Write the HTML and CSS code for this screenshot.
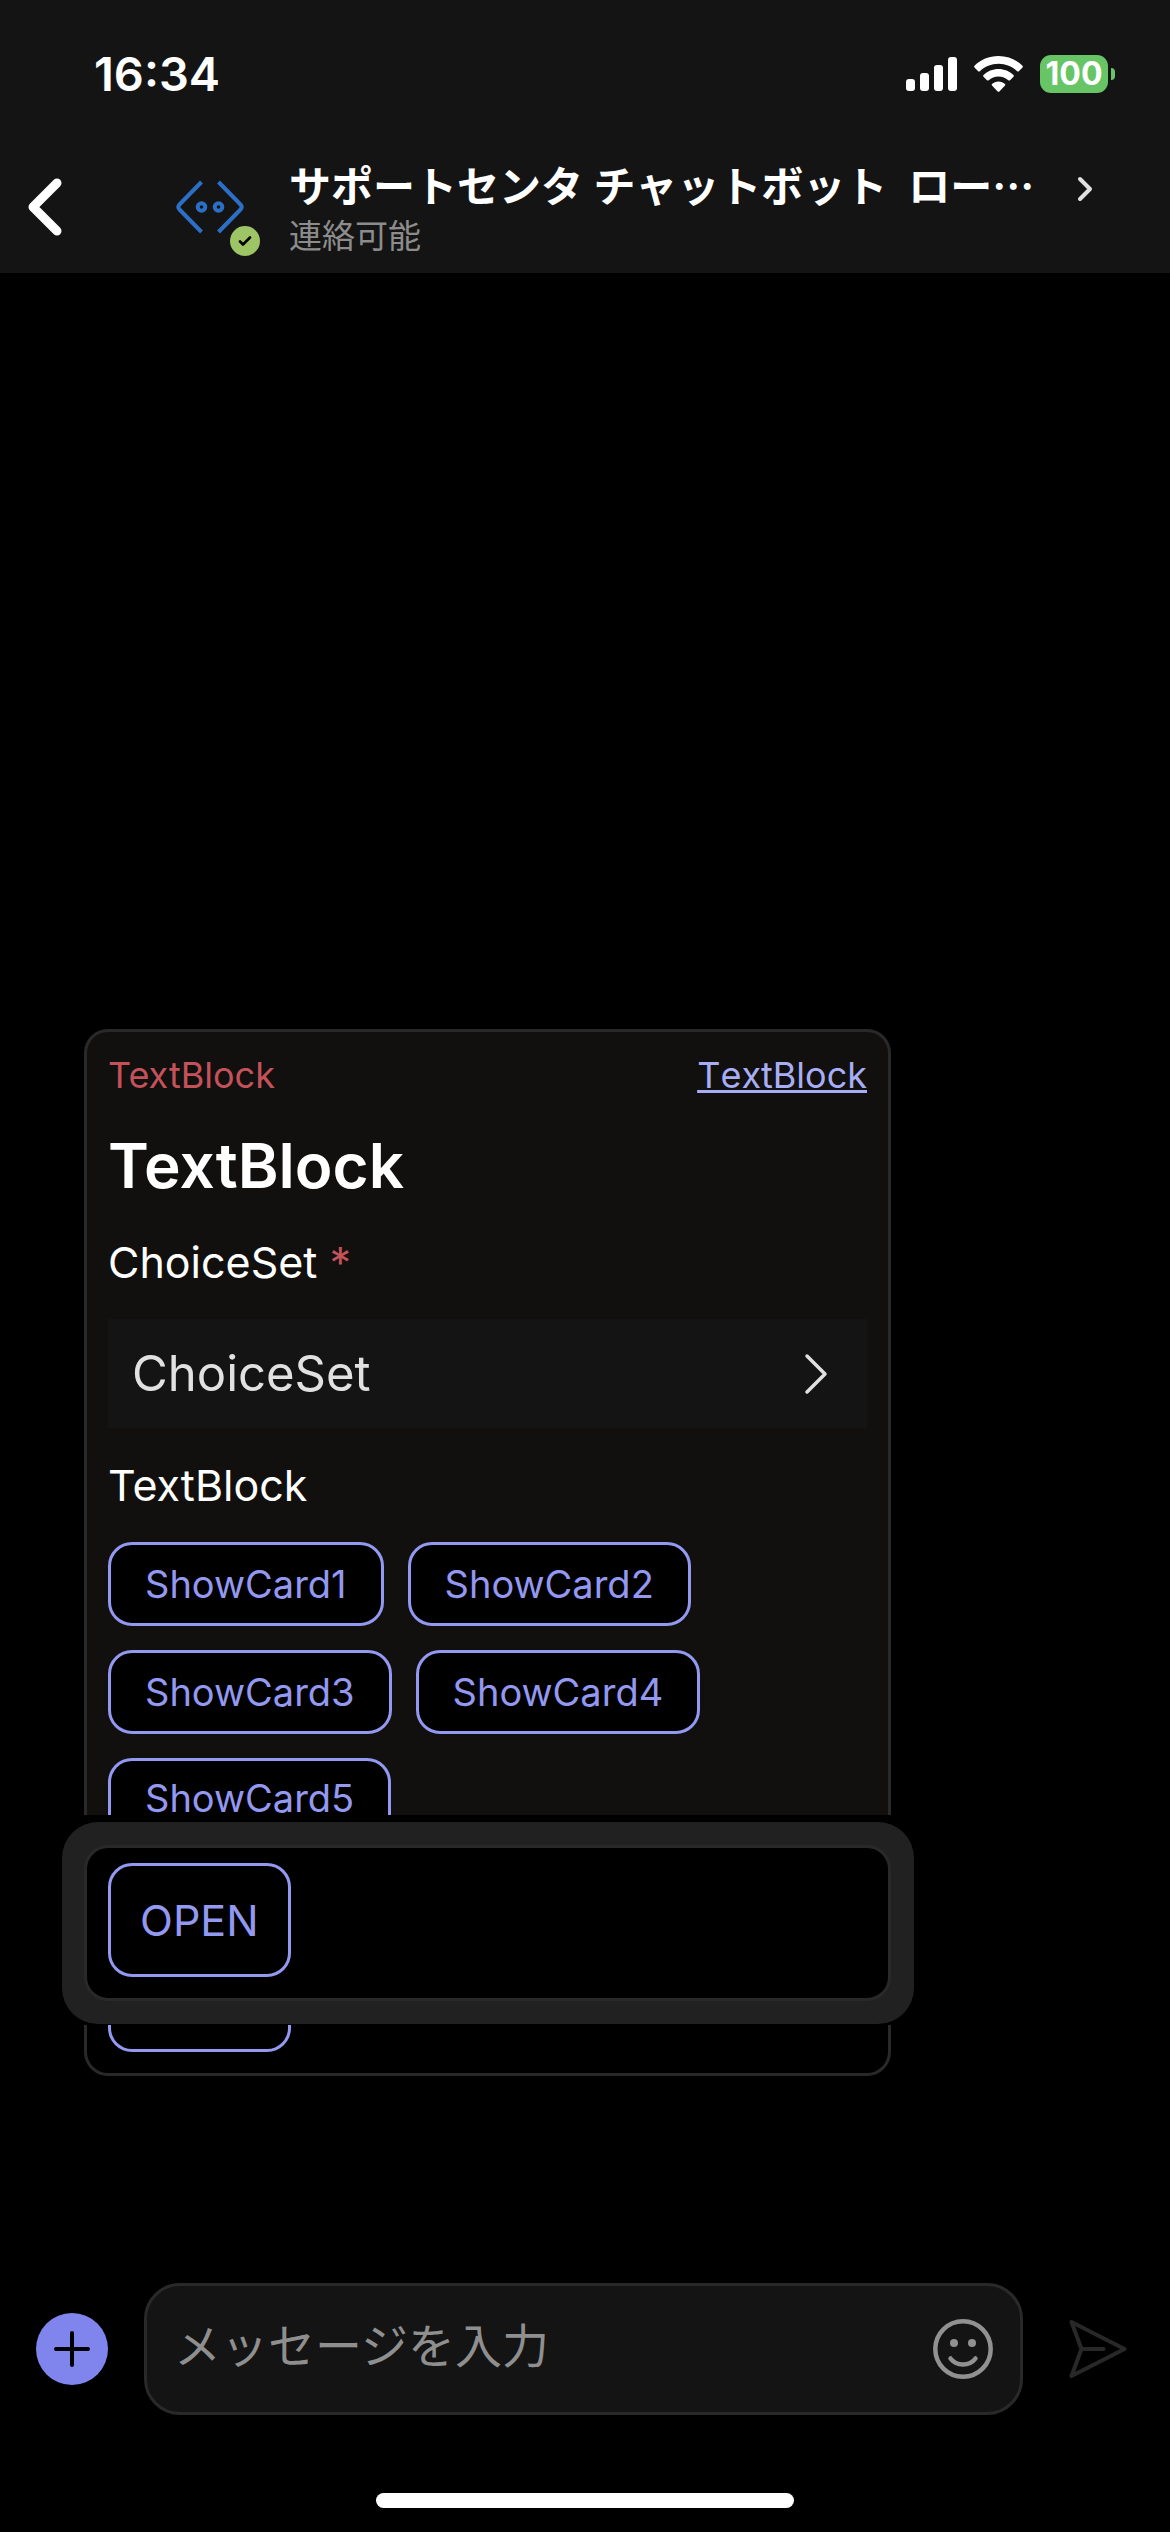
FILE: index.html
```
<!DOCTYPE html>
<html lang="ja">

<head>
    <meta charset="UTF-8">
    <meta name="viewport" content="width=device-width, initial-scale=1.0">
    <title>サポートセンタ チャットボット</title>
    <link rel="stylesheet" href="styles.css">
</head>

<body>
    <div class="app">
        <header class="top">
            <div class="status-bar">
                <span class="time">16:34</span>
                <div class="status-icons">
                    <svg class="signal" viewBox="0 0 51 34" fill="#fff">
                        <rect x="0" y="22" width="9" height="12" rx="3"/>
                        <rect x="14" y="16" width="9" height="18" rx="3"/>
                        <rect x="28" y="8" width="9" height="26" rx="3"/>
                        <rect x="42" y="0" width="9" height="34" rx="3"/>
                    </svg>
                    <svg class="wifi" viewBox="0 0 49 36" fill="#fff">
                        <path d="M24.500 0C15 0 6.600 3.700 .5 9.700c-.5 .5-.5 1.200 0 1.700l3.700 3.800c.5 .5 1.200 .5 1.700 0C10.700 10.700 17.300 7.800 24.500 7.800s13.800 2.900 18.600 7.400c.5 .5 1.200 .5 1.700 0l3.700-3.800c.5-.5 .5-1.200 0-1.700C42.400 3.700 34 0 24.500 0z"/>
                        <path d="M24.500 13C18.700 13 13.400 15.300 9.500 19c-.5 .5-.5 1.200 0 1.700l3.500 3.500c.5 .5 1.200 .5 1.700 0 2.600-2.300 6-3.700 9.800-3.700s7.200 1.400 9.800 3.700c.5 .5 1.200 .5 1.700 0l3.500-3.500c.5-.5 .5-1.200 0-1.700-3.900-3.700-9.200-6-15-6z"/>
                        <path d="M24.500 25.500c-2.500 0-4.700 .9-6.500 2.400-.5 .5-.5 1.100 0 1.600l5.600 5.900c.5 .5 1.300 .5 1.800 0l5.600-5.900c.5-.5 .5-1.100 0-1.600-1.800-1.500-4-2.400-6.500-2.400z"/>
                    </svg>
                    <div class="battery">
                        <span class="battery-level">100</span>
                        <span class="battery-tip"></span>
                    </div>
                </div>
            </div>
            <div class="chat-bar">
                <button class="back" type="button" aria-label="戻る">
                    <svg width="34" height="58" viewBox="0 0 34 58" fill="none" stroke="#fff" stroke-width="9" stroke-linecap="round" stroke-linejoin="round">
                        <path d="M29 5L5 29l24 24"/>
                    </svg>
                </button>
                <div class="avatar">
                    <svg width="68" height="54" viewBox="0 0 68 54" fill="none" stroke="#2c6fc6" stroke-width="4">
                        <path d="M25.500 2L3.500 24.500q-2.500 2.500 0 5L25.500 52"/>
                        <path d="M42.500 2l22 22.500q2.500 2.500 0 5L42.500 52"/>
                        <circle cx="25.500" cy="27" r="3.800"/>
                        <circle cx="42.500" cy="27" r="3.800"/>
                    </svg>
                    <span class="presence">
                        <svg width="14" height="10" viewBox="0 0 14 10" fill="none" stroke="#000" stroke-width="2.600" stroke-linecap="round" stroke-linejoin="round">
                            <path d="M2 5.500L5 8.500L12 1.500"/>
                        </svg>
                    </span>
                </div>
                <div class="names">
                    <h1 class="title">サポートセンタ チャットボット&nbsp; ロー<span class="dots">…</span></h1>
                    <p class="sub">連絡可能</p>
                </div>
                <svg class="go" width="18" height="26" viewBox="0 0 18 26" fill="none" stroke="#e1e1e1" stroke-width="4" stroke-linecap="round" stroke-linejoin="round">
                    <path d="M4 3l10 10L4 23"/>
                </svg>
            </div>
        </header>

        <main class="chat">
            <div class="message">
                <div class="card">
                    <div class="card-top">
                        <span class="alert">TextBlock</span>
                        <a class="link" href="#">TextBlock</a>
                    </div>
                    <h2 class="heading">TextBlock</h2>
                    <label class="label" for="choice">ChoiceSet <span class="star">*</span></label>
                    <div class="choice">
                        <select id="choice" required>
                            <option>ChoiceSet</option>
                        </select>
                        <svg width="24" height="42" viewBox="0 0 24 42" fill="none" stroke="#e1e1e1" stroke-width="3.500" stroke-linecap="round" stroke-linejoin="round">
                            <path d="M3 3l18 18L3 39"/>
                        </svg>
                    </div>
                    <p class="text">TextBlock</p>
                    <div class="actions">
                        <button class="btn" type="button">ShowCard1</button>
                        <button class="btn" type="button">ShowCard2</button>
                    </div>
                    <div class="actions">
                        <button class="btn" type="button">ShowCard3</button>
                        <button class="btn" type="button">ShowCard4</button>
                    </div>
                    <div class="actions">
                        <button class="btn btn-cut" type="button">ShowCard5</button>
                    </div>
                </div>

                <!-- raised part with the open button -->
                <div class="focus">
                    <div class="focus-card">
                        <button class="btn btn-open" type="button">OPEN</button>
                    </div>
                </div>

                <div class="card-end">
                    <div class="btn-end"></div>
                </div>
            </div>
        </main>

        <footer class="bottom">
            <div class="composer">
                <button class="add" type="button" aria-label="追加">
                    <svg width="36" height="36" viewBox="0 0 36 36" fill="none" stroke="#000" stroke-width="4" stroke-linecap="round">
                        <path d="M18 2v32M2 18h32"/>
                    </svg>
                </button>
                <div class="field">
                    <input class="input" type="text" placeholder="メッセージを入力" aria-label="メッセージを入力">
                    <button class="icon-btn" type="button" aria-label="絵文字">
                        <svg width="60" height="60" viewBox="0 0 60 60" fill="none" stroke="#919191" stroke-width="4.500" stroke-linecap="round">
                            <circle cx="30" cy="30" r="27.700"/>
                            <circle cx="21" cy="24" r="4" fill="#919191" stroke="none"/>
                            <circle cx="39" cy="24" r="4" fill="#919191" stroke="none"/>
                            <path d="M17.500 39.500c6 8 19 8 25 0"/>
                        </svg>
                    </button>
                </div>
                <button class="icon-btn" type="button" aria-label="送信">
                    <svg width="60" height="60" viewBox="0 0 60 60" fill="none" stroke="#282828" stroke-width="4" stroke-linecap="round" stroke-linejoin="round">
                        <path d="M3.500 3L56.500 30L3.500 57L13.500 30zM13.500 30h22"/>
                    </svg>
                </button>
            </div>
            <div class="home"></div>
        </footer>
    </div>
</body>

</html>
```

FILE: styles.css
```
* {
    margin: 0;
    padding: 0;
    box-sizing: border-box;
}
body {
    background: #000;
    color: #fff;
    font-family: Inter, "Noto Sans CJK JP", sans-serif;
}
button, input, select {
    font-family: inherit;
    border: none;
    background: none;
    color: inherit;
}
svg {
    display: block;
    flex-shrink: 0;
}
.app {
    display: flex;
    flex-direction: column;
    min-height: 100vh;
}

/* header */
.top {
    background: #141414;
    padding-bottom: 13px;
}
.status-bar {
    display: flex;
    justify-content: space-between;
    align-items: center;
    padding: 44px 55px 0 94px;
}
.time {
    font-size: 47px;
    line-height: 60px;
    font-weight: 600;
}
.status-icons {
    display: flex;
    align-items: center;
    gap: 17px;
}
.signal {
    width: 51px;
    height: 34px;
}
.wifi {
    width: 49px;
    height: 36px;
}
.battery {
    display: flex;
    align-items: center;
    gap: 3px;
}
.battery-level {
    width: 68px;
    border-radius: 11px;
    background: #67c566;
    font-size: 32px;
    line-height: 38px;
    font-weight: 700;
    text-align: center;
}
.battery-tip {
    width: 4px;
    height: 12px;
    border-radius: 0 4px 4px 0;
    background: #67c566;
}
.chat-bar {
    display: flex;
    align-items: center;
    padding: 50px 76px 0 28px;
}
.back {
    margin-right: 114px;
}
.avatar {
    position: relative;
    margin-right: 45px;
}
.presence {
    position: absolute;
    right: -16px;
    bottom: -22px;
    display: flex;
    align-items: center;
    justify-content: center;
    width: 30px;
    height: 30px;
    border-radius: 50%;
    background: #9dc465;
}
.names {
    flex: 1;
    min-width: 0;
    padding-bottom: 4px;
}
.title {
    padding-top: 4px;
    font-size: 42px;
    line-height: 58px;
    font-weight: 600;
    white-space: nowrap;
}
.dots {
    font-family: "Noto Sans CJK JP", sans-serif;
    line-height: 1;
}
.sub {
    font-size: 33px;
    line-height: 40px;
    color: #8c8c8c;
}
.go {
    margin-bottom: 36px;
}

/* chat */
.chat {
    flex: 1;
    display: flex;
    flex-direction: column;
    justify-content: flex-end;
}
.message {
    margin: 0 256px 207px 62px;
}
.card {
    margin: 0 23px 7px 22px;
    padding: 21px 21px 0;
    border: 3px solid #292929;
    border-bottom: none;
    border-radius: 24px 24px 0 0;
    background: #11100e;
}
.card-top {
    display: flex;
    justify-content: space-between;
    font-size: 36px;
    line-height: 44px;
}
.alert,
.star {
    color: #c4525a;
}
.link {
    color: #a8aef5;
    font-kerning: none;
    text-decoration-thickness: 3px;
    text-underline-offset: 2px;
}
.heading {
    margin-top: 29px;
    font-size: 62px;
    line-height: 80px;
    font-weight: 600;
}
.label {
    display: block;
    margin-top: 28px;
    font-size: 43px;
    line-height: 56px;
}
.choice {
    display: flex;
    align-items: center;
    margin-top: 29px;
    padding-right: 39px;
    background: #141414;
}
.choice select {
    flex: 1;
    height: 109px;
    padding-left: 24px;
    appearance: none;
    font-size: 49px;
    color: #e1e1e1;
    outline: none;
}
.text {
    margin: 28px 0;
    font-size: 43px;
    line-height: 58px;
}
.actions {
    display: flex;
    gap: 24px;
    margin-bottom: 24px;
}
.actions:last-child {
    margin-bottom: 0;
}
.btn {
    height: 84px;
    padding: 0 34px;
    border: 3px solid #9398f1;
    border-radius: 24px;
    background: #000;
    color: #9398f1;
    font-size: 38px;
}
.btn-cut {
    height: 57px;
    padding-top: 21px;
    border-bottom: none;
    border-radius: 24px 24px 0 0;
    line-height: 33px;
}
.focus {
    padding: 23px 23px 23px 22px;
    border-radius: 36px;
    background: #212121;
}
.focus-card {
    padding: 15px 21px 21px;
    border: 3px solid #292929;
    border-radius: 24px;
    background: #000;
}
.btn-open {
    display: block;
    height: 114px;
    padding: 0 29px;
    font-size: 43px;
}
.card-end {
    margin: 1px 23px 0 22px;
    padding: 0 21px 21px;
    border: 3px solid #292929;
    border-top: none;
    border-radius: 0 0 24px 24px;
}
.btn-end {
    width: 183px;
    height: 27px;
    border: 3px solid #9398f1;
    border-top: none;
    border-radius: 0 0 24px 24px;
}

/* composer */
.composer {
    display: flex;
    align-items: center;
    gap: 36px;
    padding: 0 42px 0 36px;
}
.add {
    display: flex;
    align-items: center;
    justify-content: center;
    width: 72px;
    height: 72px;
    border-radius: 50%;
    background: #8085ee;
}
.field {
    flex: 1;
    display: flex;
    align-items: center;
    min-width: 0;
    height: 132px;
    margin-right: 9px;
    padding: 0 27px;
    border: 3px solid #292929;
    border-radius: 36px;
    background: #141414;
}
.input {
    flex: 1;
    min-width: 0;
    height: 100%;
    padding-bottom: 8px;
    font-size: 47px;
    outline: none;
}
.input::placeholder {
    color: #8f8f8f;
}
.home {
    width: 418px;
    height: 15px;
    margin: 78px auto 24px;
    border-radius: 8px;
    background: #fff;
}
```
